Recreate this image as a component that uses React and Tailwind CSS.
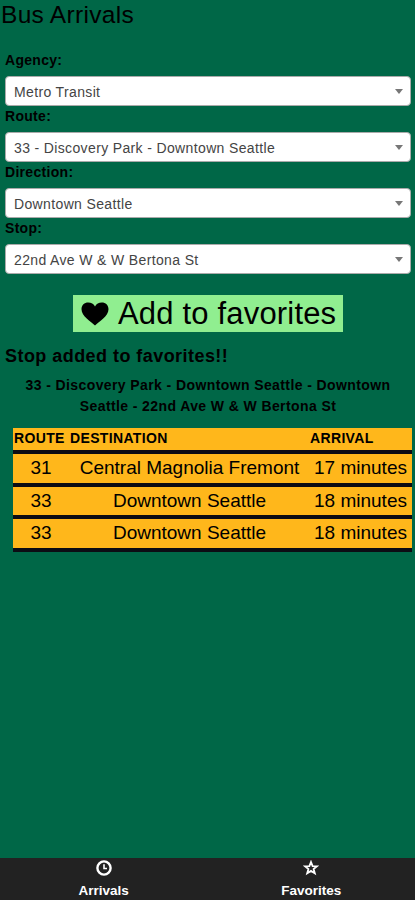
import { useState } from 'react';

const fields = [
  { label: 'Agency:', value: 'Metro Transit' },
  { label: 'Route:', value: '33 - Discovery Park - Downtown Seattle' },
  { label: 'Direction:', value: 'Downtown Seattle' },
  { label: 'Stop:', value: '22nd Ave W & W Bertona St' },
];

const arrivals = [
  { id: 1, route: '31', destination: 'Central Magnolia Fremont', arrival: '17 minutes' },
  { id: 2, route: '33', destination: 'Downtown Seattle', arrival: '18 minutes' },
  { id: 3, route: '33', destination: 'Downtown Seattle', arrival: '18 minutes' },
];

function SelectField({ label, value }) {
  return (
    <div className="h-[56px]">
      <div className="h-[27px] pt-px text-[14px] leading-[20px] font-bold tracking-[0.3px]">
        {label}
      </div>
      <div className="flex h-[30px] items-center justify-between rounded-[4px] border border-[#aaa] bg-white pr-[7px] pl-2 text-[14px] tracking-[0.36px] text-[#444]">
        <span className="pt-[2px] leading-[20px] whitespace-nowrap">{value}</span>
        <svg width="8" height="5" viewBox="0 0 8 5">
          <path d="M0 0h8L4 5z" fill="#777" />
        </svg>
      </div>
    </div>
  );
}

function HeartIcon() {
  return (
    <svg width="28" height="24" viewBox="0 0 28 24">
      <path
        d="M14 23.5C10 19.5 0.5 14.5 0.5 7.3C0.5 3 3.4 0.5 7.2 0.5C10.2 0.5 12.8 2 14 4.5C15.2 2 17.8 0.5 20.8 0.5C24.6 0.5 27.5 3 27.5 7.3C27.5 14.5 18 19.5 14 23.5Z"
        fill="#000"
      />
    </svg>
  );
}

function ClockIcon() {
  return (
    <svg width="16" height="16" viewBox="0 0 16 16" fill="none" stroke="#fff">
      <circle cx="8" cy="8" r="6.6" strokeWidth="2.4" />
      <path d="M8 4.2V8.5H11" strokeWidth="1.6" />
    </svg>
  );
}

function StarIcon() {
  return (
    <svg width="16" height="16" viewBox="0 0 16 16" fill="none" stroke="#fff">
      <path
        d="M8 2L9.6 6.1L14 6.3L10.6 9L11.8 13.3L8 10.9L4.2 13.3L5.4 9L2 6.3L6.4 6.1Z"
        strokeWidth="1.8"
      />
    </svg>
  );
}

export default function App() {
  const [tab, setTab] = useState('arrivals');

  return (
    <div className="flex h-[900px] w-[415px] flex-col overflow-hidden bg-[#006747] font-['Liberation_Sans',Arial,sans-serif] text-black">
      <h1 className="h-[49px] pl-px text-[24.5px] leading-[29px] tracking-[0.3px]">Bus Arrivals</h1>

      {/* Stop picker */}
      <div className="pr-[4px] pl-[5px]">
        {fields.map((field) => (
          <SelectField key={field.label} {...field} />
        ))}
      </div>

      <button className="mt-[22px] ml-[73px] flex h-[37px] w-[270px] items-center gap-[9px] bg-[#90ee90] pl-[8px] text-[31px] leading-[37px] tracking-[0.18px] whitespace-nowrap">
        <HeartIcon />
        <span>Add to favorites</span>
      </button>

      <div className="mt-[13px] pl-[5px] text-[18px] leading-[22px] font-bold tracking-[0.45px]">
        Stop added to favorites!!
      </div>
      <div className="mt-[8px] pl-px text-center text-[14px] leading-[21px] font-bold tracking-[0.4px]">
        33 - Discovery Park - Downtown Seattle - Downtown
        <br />
        Seattle - 22nd Ave W &amp; W Bertona St
      </div>

      {/* Arrivals */}
      <table className="mt-[11px] ml-[13px] w-[399px] table-fixed border-separate border-spacing-0 bg-[#ffb71b]">
        <colgroup>
          <col className="w-[56px]" />
          <col className="w-[240px]" />
          <col className="w-[103px]" />
        </colgroup>
        <thead>
          <tr className="h-[26px] text-left text-[14px] leading-[20px] tracking-[0.35px] [&>th]:border-b-[4px] [&>th]:border-[#0c0c14] [&>th]:pb-[2px]">
            <th className="pl-px whitespace-nowrap">ROUTE</th>
            <th className="pl-px">DESTINATION</th>
            <th className="pl-px">ARRIVAL</th>
          </tr>
        </thead>
        <tbody>
          {arrivals.map((item) => (
            <tr
              key={item.id}
              className="h-[32.5px] text-center text-[19px] leading-[28px] whitespace-nowrap [&>td]:border-b-[4px] [&>td]:border-[#0c0c14]"
            >
              <td>{item.route}</td>
              <td className="pl-px">{item.destination}</td>
              <td>{item.arrival}</td>
            </tr>
          ))}
        </tbody>
      </table>

      {/* Bottom tabs */}
      <nav className="mt-auto grid h-[42px] grid-cols-2 bg-[#222] text-[13.5px] leading-[16px] font-bold text-white">
        <button onClick={() => setTab('arrivals')} aria-pressed={tab === 'arrivals'} className="flex flex-col items-center gap-[7px] pt-[2px]">
          <ClockIcon />
          <span>Arrivals</span>
        </button>
        <button onClick={() => setTab('favorites')} aria-pressed={tab === 'favorites'} className="flex flex-col items-center gap-[7px] pt-[2px]">
          <StarIcon />
          <span>Favorites</span>
        </button>
      </nav>
    </div>
  );
}
